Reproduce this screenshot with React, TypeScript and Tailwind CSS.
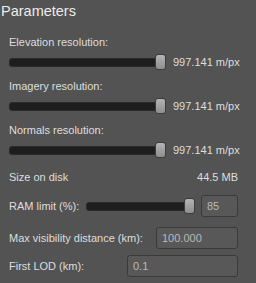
import React from "react";

const font = { fontFamily: '"Liberation Sans", Arial, sans-serif' };

function Slider({ width }: { width: number }) {
  return (
    <div className="relative flex shrink-0 items-center h-[16px]" style={{ width }}>
      <div className="w-full h-[9px] rounded-[3px] bg-[#1e1e1e] border border-[#2a2a2a]" />
      <div className="absolute right-0 top-0 w-[11px] h-[16px] rounded-[3px] border border-[#3c3c3c] bg-gradient-to-b from-[#b4b4b4] to-[#8e8e8e]" />
    </div>
  );
}

function Field({ value, width }: { value: string; width: number }) {
  return (
    <div
      className="h-[22px] shrink-0 rounded-[3px] border border-[#3a3a3a] bg-[#585858] flex items-center pl-[5px] text-[11px] text-[#b9b9b9]"
      style={{ width }}
    >
      {value}
    </div>
  );
}

function ResRow({ label }: { label: string }) {
  return (
    <>
      <div className="h-[16px] flex items-center text-[11px] text-[#dedede] whitespace-nowrap">{label}</div>
      <div className="mt-[4px] h-[16px] flex items-center whitespace-nowrap">
        <Slider width={157} />
        <span className="ml-[7px] text-[11px] text-[#dedede]">997.141 m/px</span>
      </div>
    </>
  );
}

export default function App() {
  return (
    <div className="w-[256px] h-[283px] bg-[#535353] overflow-hidden whitespace-nowrap" style={font}>
      <div className="h-[24px] flex items-center text-[14.5px] text-[#ececec] pl-[1px]">Parameters</div>
      <div className="pl-[9px] pr-[18px] pt-[10px] flex flex-col">
        <ResRow label="Elevation resolution:" />
        <div className="mt-[8px]" />
        <ResRow label="Imagery resolution:" />
        <div className="mt-[8px]" />
        <ResRow label="Normals resolution:" />
        <div className="mt-[11px] h-[16px] flex items-center justify-between text-[11px] text-[#dedede]">
          <span>Size on disk</span>
          <span>44.5 MB</span>
        </div>
        <div className="mt-[10px] h-[22px] flex items-center text-[11px] text-[#dedede]">
          <span className="w-[77px] shrink-0">RAM limit (%):</span>
          <Slider width={109} />
          <div className="ml-auto">
            <Field value="85" width={37} />
          </div>
        </div>
        <div className="mt-[10px] h-[22px] flex items-center text-[11px] text-[#dedede]">
          <span>Max visibility distance (km):</span>
          <div className="ml-auto">
            <Field value="100.000" width={82} />
          </div>
        </div>
        <div className="mt-[6px] h-[22px] flex items-center text-[11px] text-[#dedede]">
          <span>First LOD (km):</span>
          <div className="ml-auto">
            <Field value="0.1" width={111} />
          </div>
        </div>
      </div>
    </div>
  );
}
